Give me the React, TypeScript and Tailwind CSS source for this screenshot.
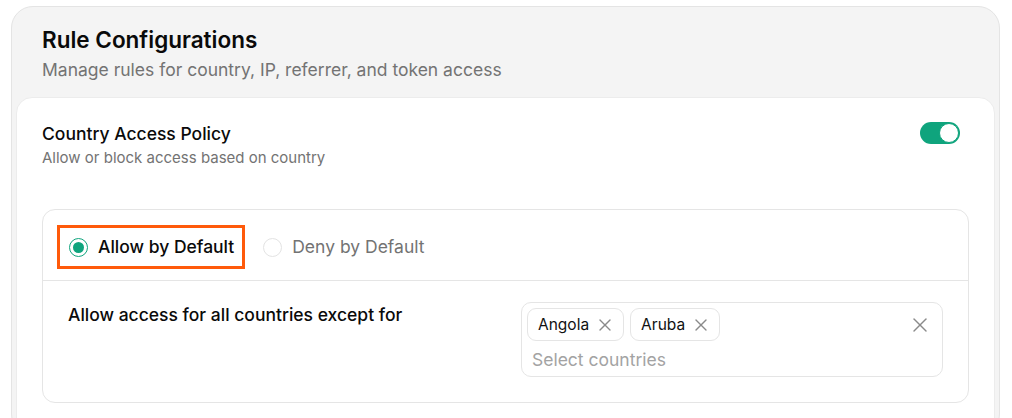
import { X } from 'lucide-react';

function Toggle() {
    return (
        <div className="w-[40px] h-[22px] rounded-full bg-[#0fa47d] flex items-center justify-end p-px">
            <div className="w-[20px] h-[20px] rounded-full bg-white border-[1.5px] border-[#0fa47d]" />
        </div>
    );
}

function Chip({ label }: { label: string }) {
    return (
        <div className="h-[33px] flex items-center gap-[6px] pl-[10px] pr-[8px] border border-[#e5e5e5] rounded-[9px] text-[15.5px] text-[#111]">
            <span>{label}</span>
            <X className="w-[20px] h-[20px] text-[#8a8a8a]" strokeWidth={1.6} />
        </div>
    );
}

export default function App() {
    return (
        <div className="min-h-screen bg-white pl-[11px] pt-[6px] pr-[12px] overflow-hidden" style={{ fontFamily: 'Inter, "Noto Sans", sans-serif' }}>
            <div className="w-[989px] h-[430px] bg-[#f4f4f4] border border-[#e4e4e4] rounded-[22px] px-[4px]">
                <div className="pl-[26px] pt-[18px] pb-[14px]">
                    <h2 className="text-[22.5px] leading-[30px] font-semibold text-[#0a0a0a]">Rule Configurations</h2>
                    <p className="text-[17.5px] leading-[26px] mt-[2px] text-[#737373]">Manage rules for country, IP, referrer, and token access</p>
                </div>
                <div className="bg-white rounded-[16px] border border-[#ececec] px-[25px] pt-[23px] h-[340px]">
                    <div className="flex items-start justify-between">
                        <div>
                            <div className="text-[17.5px] leading-[26px] font-medium text-[#0a0a0a]">Country Access Policy</div>
                            <div className="text-[15px] leading-[22px] text-[#737373]">Allow or block access based on country</div>
                        </div>
                        <div className="mt-[1px] mr-[9px]">
                            <Toggle />
                        </div>
                    </div>
                    <div className="mt-[40px] border border-[#e5e5e5] rounded-[13px]">
                        <div className="flex items-center pl-[14px] pt-[15px] pb-[11px] gap-[18px]">
                            <div className="flex items-center gap-[10px] h-[44px] pl-[9px] pr-[8px] border-[3px] border-[#ff5a0a]">
                                <div className="w-[19px] h-[19px] rounded-full border border-[#0fa47d] flex items-center justify-center">
                                    <div className="w-[11px] h-[11px] rounded-full bg-[#0fa47d]" />
                                </div>
                                <span className="text-[17.5px] font-medium text-[#0a0a0a]">Allow by Default</span>
                            </div>
                            <div className="flex items-center gap-[10px]">
                                <div className="w-[19px] h-[19px] rounded-full border border-[#e3e3e3]" />
                                <span className="text-[17.5px] text-[#737373]">Deny by Default</span>
                            </div>
                        </div>
                        <div className="border-t border-[#e5e5e5] flex items-start justify-between pl-[25px] pr-[25px] pt-[21px] pb-[25px]">
                            <div className="text-[17.5px] leading-[26px] font-medium text-[#0a0a0a]">Allow access for all countries except for</div>
                            <div className="w-[422px] border border-[#e5e5e5] rounded-[10px] p-[5px] pb-[4px]">
                                <div className="flex items-center gap-[6px]">
                                    <Chip label="Angola" />
                                    <Chip label="Aruba" />
                                    <div className="flex-1" />
                                    <X className="w-[24px] h-[24px] text-[#8a8a8a] mr-[5px]" strokeWidth={1.4} />
                                </div>
                                <div className="pl-[5px] pt-[7px] text-[17.5px] leading-[24px] text-[#a3a3a3]">Select countries</div>
                            </div>
                        </div>
                    </div>
                </div>
            </div>
        </div>
    );
}
